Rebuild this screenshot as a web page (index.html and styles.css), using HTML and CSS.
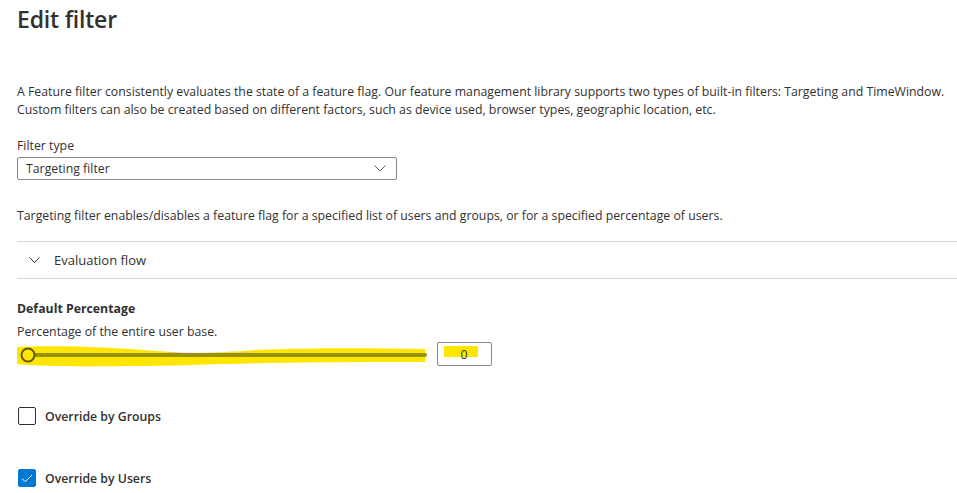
FILE: index.html
```html
<!DOCTYPE html>
<html lang="en">
<head>
    <meta charset="UTF-8">
    <meta name="viewport" content="width=device-width, initial-scale=1.0">
    <title>Edit filter</title>
    <link rel="stylesheet" href="styles.css">
</head>
<body>
    <div class="panel">
        <h1>Edit filter</h1>

        <p class="intro">
            A Feature filter consistently evaluates the state of a feature flag. Our feature management library supports two types of built-in filters: Targeting and TimeWindow.<br>
            Custom filters can also be created based on different factors, such as device used, browser types, geographic location, etc.
        </p>

        <div class="field">
            <label class="field-label">Filter type</label>
            <div class="dropdown">
                <span>Targeting filter</span>
                <svg class="chevron" width="12" height="7" viewBox="0 0 12 7">
                    <path d="M0.5 0.5 L6 6 L11.5 0.5" fill="none" stroke="#605e5c" stroke-width="1"/>
                </svg>
            </div>
        </div>

        <p class="hint">Targeting filter enables/disables a feature flag for a specified list of users and groups, or for a specified percentage of users.</p>

        <div class="accordion">
            <svg class="acc-chevron" width="11" height="6" viewBox="0 0 11 6">
                <path d="M0.5 0.5 L5.5 5.5 L10.5 0.5" fill="none" stroke="#323130" stroke-width="1"/>
            </svg>
            <span>Evaluation flow</span>
        </div>

        <div class="section">
            <div class="section-title">Default Percentage</div>
            <div class="section-desc">Percentage of the entire user base.</div>
            <div class="slider-row">
                <svg class="slider" width="414" height="26" viewBox="0 0 414 26">
                    <!-- marker highlight -->
                    <path d="M0 4 C40 2 90 4 140 8 C175 11 200 10 240 7 C290 5 350 5 408 6 L408 19 C350 19 300 19 250 20 C200 21 160 23 110 23 C60 24 20 23 0 21 Z" fill="#ffe600"/>
                    <line x1="11" y1="12" x2="408" y2="12" stroke="#9a9100" stroke-width="4" stroke-linecap="round"/>
                    <path d="M150 10.2 C180 11 205 11 232 10.2" fill="none" stroke="#8a8886" stroke-width="0.8"/>
                    <circle cx="11" cy="12" r="6.5" fill="#ffe600" stroke="#5c5800" stroke-width="2"/>
                </svg>
                <div class="num-box">
                    <span class="num-mark"></span>
                    <span class="num-value">0</span>
                </div>
            </div>
        </div>

        <div class="check-row">
            <span class="checkbox"></span>
            <span class="check-label">Override by Groups</span>
        </div>

        <div class="check-row checked">
            <span class="checkbox">
                <svg width="12" height="9" viewBox="0 0 12 9">
                    <path d="M1 4.5 L4.2 7.7 L11 1" fill="none" stroke="#fff" stroke-width="1"/>
                </svg>
            </span>
            <span class="check-label">Override by Users</span>
        </div>
    </div>
</body>
</html>
```

FILE: styles.css
```css
body {
    margin: 0;
    background: #fff;
    color: #323130;
    font-family: "Open Sans", "Noto Sans", sans-serif;
    font-size: 12.3px;
    overflow: hidden;
}
.panel {
    padding: 0 0 0 17px;
}
h1 {
    margin: 0;
    padding-top: 3px;
    font-size: 23px;
    font-weight: 600;
    line-height: 32px;
    letter-spacing: -0.2px;
}
.intro {
    margin: 48px 0 0;
    line-height: 18px;
    white-space: nowrap;
}
.field {
    margin-top: 18px;
}
.field-label {
    display: block;
    line-height: 18px;
    margin-bottom: 2px;
}
.dropdown {
    width: 360px;
    height: 21px;
    border: 1px solid #8a8886;
    border-radius: 2px;
    padding: 0 10px 0 8px;
    display: flex;
    align-items: center;
    justify-content: space-between;
}
.hint {
    margin: 27px 0 0;
    line-height: 18px;
}
.accordion {
    margin-top: 16px;
    height: 36px;
    border-top: 1px solid #d6d6d6;
    border-bottom: 1px solid #d6d6d6;
    display: flex;
    align-items: center;
    padding-left: 12px;
    font-size: 13px;
}
.acc-chevron {
    margin-right: 14px;
}
.section {
    margin-top: 21px;
}
.section-title {
    font-weight: 700;
    line-height: 18px;
}
.section-desc {
    margin-top: 5px;
    line-height: 18px;
}
.slider-row {
    display: flex;
    align-items: flex-start;
    margin-top: 1px;
}
.slider {
    display: block;
    margin-top: 1px;
}
.num-box {
    position: relative;
    margin-left: 6px;
    width: 53px;
    height: 22px;
    border: 1px solid #8a8886;
    border-radius: 2px;
    display: flex;
    align-items: center;
    justify-content: center;
}
.num-mark {
    position: absolute;
    left: 6px;
    top: 3px;
    width: 34px;
    height: 11px;
    background: #ffe600;
}
.num-value {
    position: relative;
    margin-right: 1px;
}
.check-row {
    display: flex;
    align-items: center;
    margin-top: 38px;
}
.check-row.checked {
    margin-top: 44px;
}
.checkbox {
    width: 16px;
    height: 16px;
    margin-left: 1px;
    border: 1px solid #323130;
    border-radius: 2px;
    display: flex;
    align-items: center;
    justify-content: center;
}
.checked .checkbox {
    background: #0078d4;
    border-color: #0078d4;
}
.check-label {
    margin-left: 9px;
    font-weight: 600;
}
```
